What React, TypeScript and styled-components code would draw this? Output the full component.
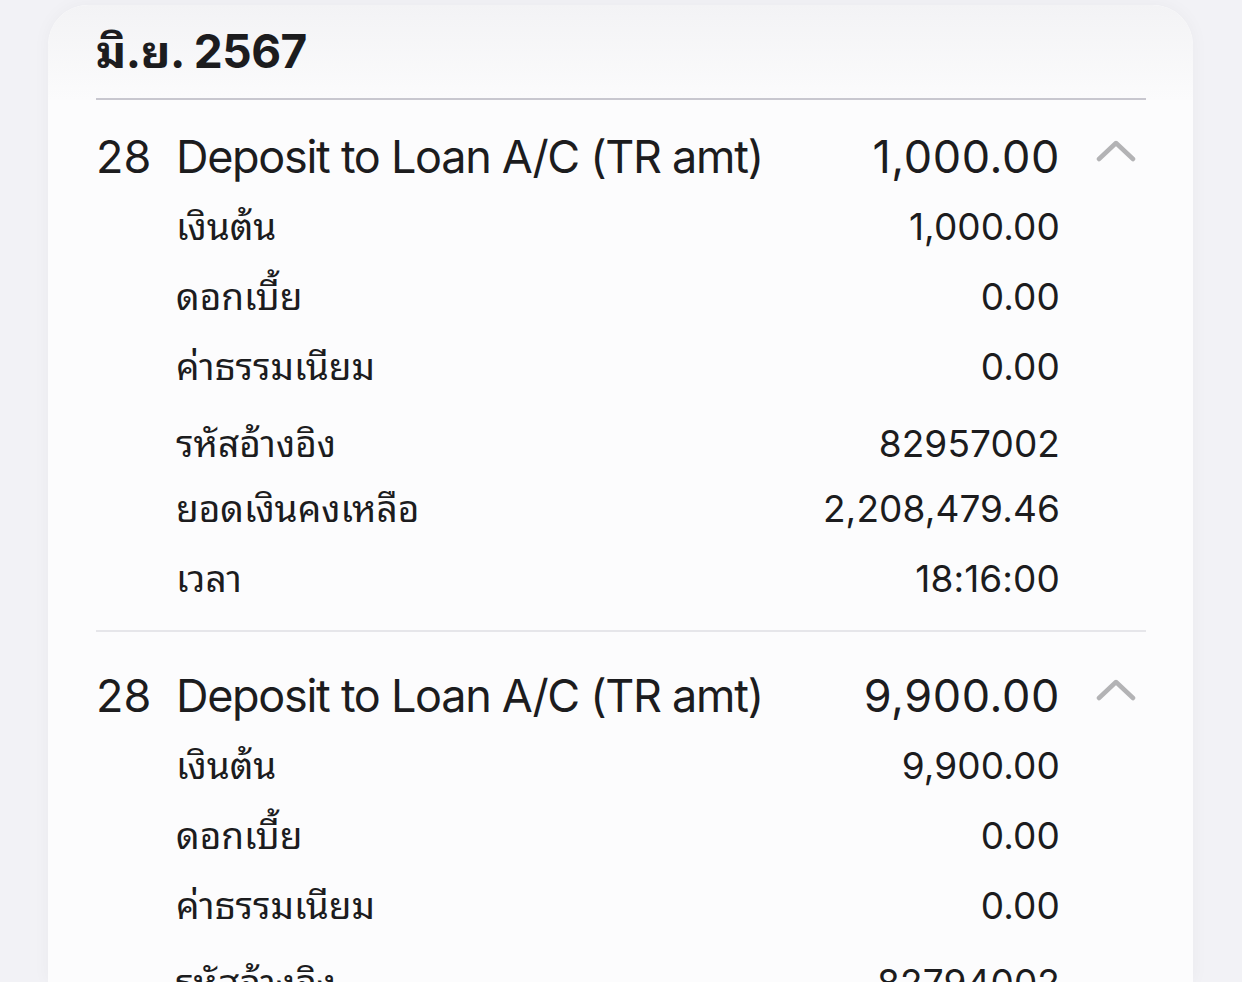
import React from "react";
import styled, { createGlobalStyle } from "styled-components";

const GlobalStyle = createGlobalStyle`
  html, body {
    margin: 0;
    padding: 0;
    background: #f2f2f6;
    overflow: hidden;
  }
  body {
    font-family: Inter, "Noto Sans Thai Looped", Loma, "Noto Sans", "DejaVu Sans", sans-serif;
    color: #1c1c1e;
  }
`;

const Page = styled.div`
  height: 982px;
  padding: 5px 49px 0 48px;
  box-sizing: border-box;
  background: #f2f2f6;
`;

const Card = styled.div`
  height: 100%;
  background: #fcfcfd;
  border-radius: 40px 40px 0 0;
  box-shadow: 0 0 18px rgba(0, 0, 0, 0.04);
  padding: 0 47px 0 48px;
  overflow: hidden;
`;

const Header = styled.div`
  margin: 0 -47px 0 -48px;
  padding: 0 47px 0 48px;
  border-radius: 40px 40px 0 0;
  background: linear-gradient(#f3f3f5, #fbfbfc);
`;

const MonthTitle = styled.h2`
  margin: 0;
  height: 95px;
  display: flex;
  align-items: center;
  box-sizing: border-box;
  font-size: 46px;
  line-height: 1.2;
  font-weight: 700;
  letter-spacing: -0.5px;
  border-bottom: 2px solid #c8c7cf;
`;

const Section = styled.div<{ $first?: boolean; $last?: boolean }>`
  padding: ${(p) => (p.$first ? "22px" : "29px")} 0 16px;
  border-bottom: ${(p) => (p.$last ? "none" : "2px solid #e6e6ea")};
`;

const TitleRow = styled.div`
  display: grid;
  grid-template-columns: 80px 1fr auto 86px;
  align-items: center;
  height: 70px;
  font-size: 45px;
  line-height: 1.2;
`;

const EntryTitle = styled.div`
  letter-spacing: -1.3px;
`;

const Amount = styled.div<{ $wide?: boolean }>`
  text-align: right;
  letter-spacing: ${(p) => (p.$wide ? "0.6px" : "0.1px")};
`;

const Chevron = styled.div`
  display: flex;
  justify-content: flex-end;
  padding-right: 10px;
  margin-top: -12px;
`;

const DetailRow = styled.div<{ $tall?: boolean }>`
  display: grid;
  grid-template-columns: 1fr auto;
  align-items: center;
  box-sizing: border-box;
  height: ${(p) => (p.$tall ? "72px" : "70px")};
  padding: ${(p) => (p.$tall ? "12px" : "0")} 86px 0 80px;
  font-size: 37px;
  line-height: 1.2;
`;

type Entry = {
  day: string;
  title: string;
  amount: string;
  details: [string, string][];
};

const entries: Entry[] = [
  {
    day: "28",
    title: "Deposit to Loan A/C (TR amt)",
    amount: "1,000.00",
    details: [
      ["เงินต้น", "1,000.00"],
      ["ดอกเบี้ย", "0.00"],
      ["ค่าธรรมเนียม", "0.00"],
      ["รหัสอ้างอิง", "82957002"],
      ["ยอดเงินคงเหลือ", "2,208,479.46"],
      ["เวลา", "18:16:00"],
    ],
  },
  {
    day: "28",
    title: "Deposit to Loan A/C (TR amt)",
    amount: "9,900.00",
    details: [
      ["เงินต้น", "9,900.00"],
      ["ดอกเบี้ย", "0.00"],
      ["ค่าธรรมเนียม", "0.00"],
      ["รหัสอ้างอิง", "82794002"],
      ["ยอดเงินคงเหลือ", "2,207,479.46"],
      ["เวลา", "17:02:00"],
    ],
  },
];

const ChevronUp = () => (
  <svg width="40" height="24" viewBox="0 0 40 24">
    <path
      d="M3 20 L20 4 L37 20"
      fill="none"
      stroke="#b3b3b5"
      strokeWidth="4.5"
      strokeLinecap="round"
      strokeLinejoin="round"
    />
  </svg>
);

const App: React.FC = () => {
  return (
    <Page>
      <GlobalStyle />
      <Card>
        <Header>
          <MonthTitle>มิ.ย. 2567</MonthTitle>
        </Header>
        {entries.map((entry, index) => (
          <Section
            key={index}
            $first={index === 0}
            $last={index === entries.length - 1}
          >
            <TitleRow>
              <div>{entry.day}</div>
              <EntryTitle>{entry.title}</EntryTitle>
              <Amount $wide>{entry.amount}</Amount>
              <Chevron>
                <ChevronUp />
              </Chevron>
            </TitleRow>
            {entry.details.map(([label, value]) => (
              <DetailRow key={label} $tall={label === "รหัสอ้างอิง"}>
                <div>{label}</div>
                <Amount>{value}</Amount>
              </DetailRow>
            ))}
          </Section>
        ))}
      </Card>
    </Page>
  );
};

export default App;
